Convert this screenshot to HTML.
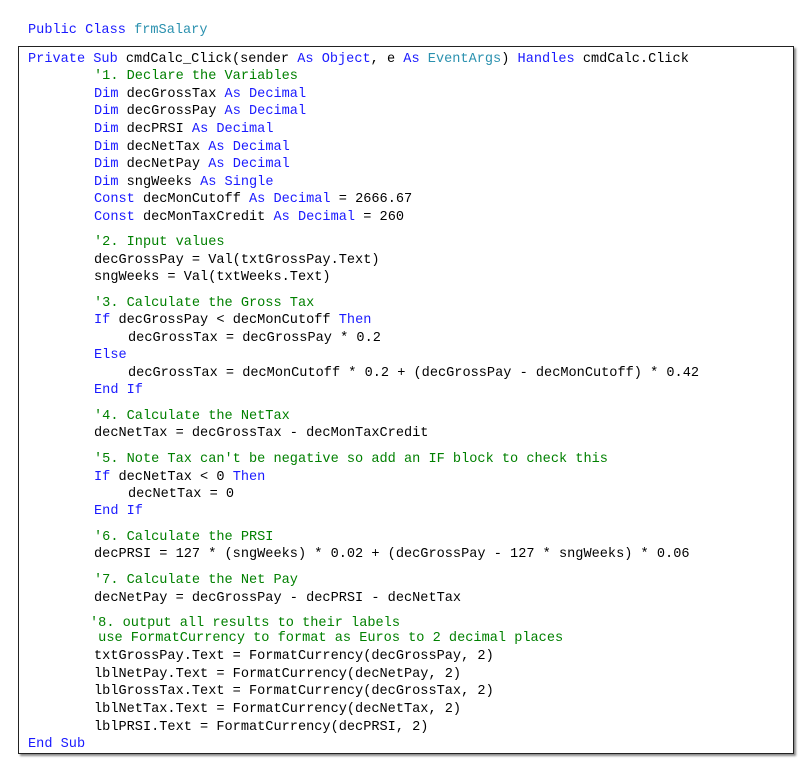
<!DOCTYPE html>
<html><head><meta charset="utf-8"><style>
body{margin:0;width:808px;height:761px;background:#fff;position:relative;overflow:hidden;font-family:"Liberation Mono",monospace;font-size:13.6px;}
.box{position:absolute;left:18px;top:46px;width:774px;height:706px;border:1px solid #222;box-shadow:2px 2px 2px #888;}
.w{position:absolute;left:0;top:2px;width:808px;height:761px;}
.l{position:absolute;white-space:pre;line-height:18px;color:#000;}
.k{color:#1a1aff}.c{color:#008000}.t{color:#2b91af}
</style></head><body>
<div class="box"></div>
<div class="w">
<div class="l" style="left:28px;top:20px"><span class="k">Public Class</span> <span class="t">frmSalary</span></div>
<div class="l" style="left:28px;top:49px"><span class="k">Private Sub</span> cmdCalc_Click(sender <span class="k">As</span> <span class="k">Object</span>, e <span class="k">As</span> <span class="t">EventArgs</span>) <span class="k">Handles</span> cmdCalc.Click</div>
<div class="l c" style="left:94px;top:66px">'1. Declare the Variables</div>
<div class="l" style="left:94px;top:84px"><span class="k">Dim</span> decGrossTax <span class="k">As Decimal</span></div>
<div class="l" style="left:94px;top:101px"><span class="k">Dim</span> decGrossPay <span class="k">As Decimal</span></div>
<div class="l" style="left:94px;top:119px"><span class="k">Dim</span> decPRSI <span class="k">As Decimal</span></div>
<div class="l" style="left:94px;top:137px"><span class="k">Dim</span> decNetTax <span class="k">As Decimal</span></div>
<div class="l" style="left:94px;top:154px"><span class="k">Dim</span> decNetPay <span class="k">As Decimal</span></div>
<div class="l" style="left:94px;top:172px"><span class="k">Dim</span> sngWeeks <span class="k">As Single</span></div>
<div class="l" style="left:94px;top:189px"><span class="k">Const</span> decMonCutoff <span class="k">As Decimal</span> = 2666.67</div>
<div class="l" style="left:94px;top:207px"><span class="k">Const</span> decMonTaxCredit <span class="k">As Decimal</span> = 260</div>
<div class="l c" style="left:94px;top:232px">'2. Input values</div>
<div class="l" style="left:94px;top:250px">decGrossPay = Val(txtGrossPay.Text)</div>
<div class="l" style="left:94px;top:267px">sngWeeks = Val(txtWeeks.Text)</div>
<div class="l c" style="left:94px;top:293px">'3. Calculate the Gross Tax</div>
<div class="l" style="left:94px;top:310px"><span class="k">If</span> decGrossPay &lt; decMonCutoff <span class="k">Then</span></div>
<div class="l" style="left:128px;top:328px">decGrossTax = decGrossPay * 0.2</div>
<div class="l k" style="left:94px;top:345px">Else</div>
<div class="l" style="left:128px;top:363px">decGrossTax = decMonCutoff * 0.2 + (decGrossPay - decMonCutoff) * 0.42</div>
<div class="l k" style="left:94px;top:380px">End If</div>
<div class="l c" style="left:94px;top:406px">'4. Calculate the NetTax</div>
<div class="l" style="left:94px;top:423px">decNetTax = decGrossTax - decMonTaxCredit</div>
<div class="l c" style="left:94px;top:449px">'5. Note Tax can't be negative so add an IF block to check this</div>
<div class="l" style="left:94px;top:467px"><span class="k">If</span> decNetTax &lt; 0 <span class="k">Then</span></div>
<div class="l" style="left:128px;top:484px">decNetTax = 0</div>
<div class="l k" style="left:94px;top:501px">End If</div>
<div class="l c" style="left:94px;top:527px">'6. Calculate the PRSI</div>
<div class="l" style="left:94px;top:544px">decPRSI = 127 * (sngWeeks) * 0.02 + (decGrossPay - 127 * sngWeeks) * 0.06</div>
<div class="l c" style="left:94px;top:570px">'7. Calculate the Net Pay</div>
<div class="l" style="left:94px;top:588px">decNetPay = decGrossPay - decPRSI - decNetTax</div>
<div class="l c" style="left:90px;top:613px">'8. output all results to their labels</div>
<div class="l c" style="left:90px;top:628px"> use FormatCurrency to format as Euros to 2 decimal places</div>
<div class="l" style="left:94px;top:646px">txtGrossPay.Text = FormatCurrency(decGrossPay, 2)</div>
<div class="l" style="left:94px;top:664px">lblNetPay.Text = FormatCurrency(decNetPay, 2)</div>
<div class="l" style="left:94px;top:681px">lblGrossTax.Text = FormatCurrency(decGrossTax, 2)</div>
<div class="l" style="left:94px;top:699px">lblNetTax.Text = FormatCurrency(decNetTax, 2)</div>
<div class="l" style="left:94px;top:717px">lblPRSI.Text = FormatCurrency(decPRSI, 2)</div>
<div class="l k" style="left:28px;top:734px">End Sub</div>
</div>
</body></html>
